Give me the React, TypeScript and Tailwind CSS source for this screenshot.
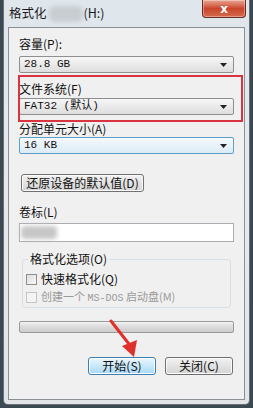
import React from "react";

const cjk = { fontFamily: '"SimSun", "Noto Sans CJK SC", "Liberation Sans", sans-serif' };
const mono = { fontFamily: '"Liberation Mono", "Noto Sans CJK SC", monospace' };

function Select({ value, focused }: { value: string; focused?: boolean }) {
  return (
    <div
      className={`flex h-[17px] items-center justify-between rounded-[2px] border px-[4px] text-[11px] text-[#111] ${
        focused
          ? "border-[#5d9fc9] bg-gradient-to-b from-[#f4f9fd] to-[#dcebf6]"
          : "border-[#8e8f8f] bg-gradient-to-b from-[#f6f6f6] to-[#dedede]"
      }`}
    >
      <span className="whitespace-pre" style={mono}>{value}</span>
      <svg width="7" height="4" viewBox="0 0 7 4" className="mr-[2px]">
        <path d="M0 0h7L3.5 4z" fill="#222" />
      </svg>
    </div>
  );
}

function Button({ label, className = "", hot }: { label: string; className?: string; hot?: boolean }) {
  return (
    <div
      className={`flex h-[18px] items-center justify-center rounded-[3px] border text-[12px] text-[#111] ${
        hot
          ? "border-[#3c7fb1] bg-gradient-to-b from-[#eaf6fd] to-[#a7d9f5] shadow-[inset_0_0_0_1px_#ffffff]"
          : "border-[#707070] bg-gradient-to-b from-[#f2f2f2] to-[#d4d4d4] shadow-[inset_0_0_0_1px_#fbfbfb]"
      } ${className}`}
    >
      {label}
    </div>
  );
}

export default function App() {
  return (
    <div className="relative h-[408px] w-[253px] overflow-hidden bg-[#3b4a52]" style={cjk}>
      {/* window frame */}
      <div className="absolute inset-x-[3px] top-0 bottom-[3px] rounded-b-[5px] border-x border-b border-[#6b6f73] bg-gradient-to-b from-[#dfe6ec] via-[#e7eaed] to-[#e2e5e8]">
        <div className="flex h-[27px] items-center pl-[5px] text-[12.5px] text-[#1a1a1a]">
          <span>格式化</span>
          <span className="ml-[2px] h-[16px] w-[34px] rounded-[6px] bg-[#c8cdd2] blur-[2px]" />
          <span className="ml-[1px]">(H:)</span>
        </div>
        {/* close button */}
        <div className="absolute right-[3px] top-0 flex h-[18px] w-[44px] items-center justify-center rounded-b-[4px] border border-t-0 border-[#6a2a22] bg-gradient-to-b from-[#e8a493] via-[#c9452c] to-[#d46a4c] shadow-[inset_0_0_0_1px_rgba(255,255,255,0.35)]">
          <span className="text-[12px] font-bold leading-none text-white" style={{ fontFamily: '"DejaVu Sans", sans-serif' }}>
            x
          </span>
        </div>

        {/* client area */}
        <div className="absolute left-[4px] right-[4px] top-[27px] bottom-[4px] border border-[#8b9096] bg-[#f0f0f0] px-[10px] text-[12px] text-[#111]">
          <div className="mt-[9px] h-[14px] leading-[14px]">容量(P):</div>
          <div className="mt-[5px]">
            <Select value="28.8 GB" />
          </div>
          <div className="mt-[9px] h-[14px] leading-[14px]">文件系统(F)</div>
          <div className="mt-[2px]">
            <Select value="FAT32 (默认)" />
          </div>
          <div className="mt-[7px] h-[14px] leading-[14px]">分配单元大小(A)</div>
          <div className="mt-[1px]">
            <Select value="16 KB" focused />
          </div>
          <div className="mt-[20px] flex">
            <Button label="还原设备的默认值(D)" className="w-[123px] ml-[2px]" />
          </div>
          <div className="mt-[13px] h-[14px] leading-[14px]">卷标(L)</div>
          <div className="mt-[4px] flex h-[19px] items-center border border-[#abadb3] bg-white pl-[1px]">
            <span className="h-[13px] w-[36px] rounded-[4px] bg-[#c6c6c6] blur-[2px]" />
          </div>

          {/* group box */}
          <div className="relative mx-[3px] mt-[17px] h-[49px] rounded-[3px] border border-[#d5dfe5] px-[3px] pt-[12px]">
            <span className="absolute -top-[8px] left-[5px] bg-[#f0f0f0] px-[2px] text-[12px] leading-[14px]">
              格式化选项(O)
            </span>
            <div className="flex h-[14px] items-center">
              <span className="h-[11px] w-[11px] border border-[#8f8f8f] bg-gradient-to-br from-[#dcdcdc] to-[#fafafa]" />
              <span className="ml-[4px]">快速格式化(Q)</span>
            </div>
            <div className="mt-[4px] flex h-[14px] items-center text-[#9a9a9a]">
              <span className="h-[11px] w-[11px] border border-[#c4c4c4] bg-[#f4f4f4]" />
              <span className="ml-[4px] text-[11px]">
                创建一个 <span style={mono} className="text-[10px]">MS-DOS</span> 启动盘(M)
              </span>
            </div>
          </div>

          {/* progress bar */}
          <div className="mt-[13px] h-[12px] rounded-[2px] border border-[#9a9a9a] bg-gradient-to-b from-[#f3f3f3] via-[#dadada] to-[#cdcdcd]" />

          <div className="mt-[24px] flex justify-end gap-[9px] pr-[1px]">
            <Button label="开始(S)" className="w-[68px]" hot />
            <Button label="关闭(C)" className="w-[68px]" />
          </div>
        </div>
      </div>

      {/* red highlight box */}
      <div className="pointer-events-none absolute left-[18px] top-[75px] h-[47px] w-[225px] border-2 border-[#d9343f]" />

      {/* red arrow */}
      <svg className="pointer-events-none absolute left-[105px] top-[318px]" width="40" height="42" viewBox="0 0 40 42">
        <path d="M6 3 L24 26" stroke="#e0302c" strokeWidth="3" strokeLinecap="round" />
        <path d="M17 28 L32 22 L29 39 Z" fill="#e0302c" />
      </svg>
    </div>
  );
}
